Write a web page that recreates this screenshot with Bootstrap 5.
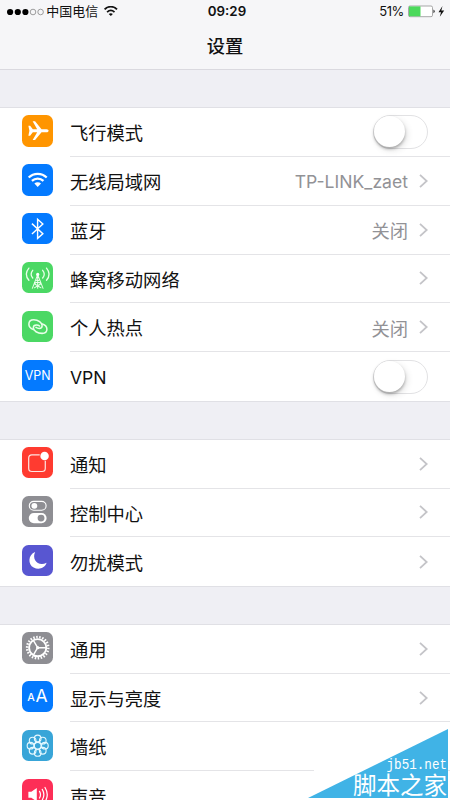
<!DOCTYPE html>
<html lang="zh-CN">
<head>
<meta charset="utf-8">
<meta name="viewport" content="width=device-width, initial-scale=1">
<title>设置</title>
<link href="https://cdn.jsdelivr.net/npm/bootstrap@5.3.0/dist/css/bootstrap.min.css" rel="stylesheet">
<style>
  body { font-family: Inter, "Noto Sans CJK SC", sans-serif; font-size: 18.3px; line-height: 24px; color: #111; background: #efeff4; }
  .screen { width: 450px; height: 800px; }
  .top-area { height: 70px; background: #f6f6f8; border-bottom: 1px solid #dad9df; }
  .status { height: 23px; font-size: 13px; line-height: 23px; padding: 0 5px 0 7px; }
  .status-side { flex: 1 1 0; }
  .clock { font-weight: 600; font-size: 13.3px; position: relative; left: 1px; }
  .percent { letter-spacing: -.4px; }
  .title { font-size: 18.3px; font-weight: 500; line-height: 46px; }
  .group { background: #fff; margin-top: 38px; box-shadow: 0 0 0 1px #e0e0e5; }
  .group + .group { margin-top: 38.6px; }
  .item { height: 48.85px; padding: 0 0 0 22px; border: 0; background: #fff; color: #111; }
  .tile { width: 31.4px; height: 31.4px; margin-top: 7.4px; border-radius: 6.5px; }
  .tile svg { width: 31.4px; height: 31.4px; display: block; }
  .body-line { margin-left: 16.6px; padding-right: 22px; border-bottom: 1px solid #e4e4e7; }
  .item:last-child .body-line { border-bottom: 0; }
  .label { padding-top: 2.2px; }
  .value { color: #929296; padding-top: 2.6px; }
  .latin { font-size: 17.6px; }
  .chev { width: 9px; height: 14px; margin-left: 11px; }
  .c-orange { background: #ff9500; } .c-blue { background: #047aff; } .c-green { background: #4bd864; }
  .c-red { background: #ff3b30; } .c-gray { background: #8e8e93; } .c-purple { background: #5856d1; }
  .c-cyan { background: #38a5d8; } .c-pink { background: #fd2e57; }
  .toggle { width: 55px; height: 34px; border: 1.5px solid #e2e2e4; border-radius: 17px; background: #fff; }
  .knob { width: 31px; height: 31px; border-radius: 50%; background: #fff; box-shadow: 0 2px 3px rgba(0,0,0,.28), 2px 3px 7px rgba(0,0,0,.12); }
  .stamp { right: 2px; bottom: 2px; width: 140px; height: 69px; background: #40b3e6; clip-path: polygon(0 100%, 100% 0, 100% 100%); }
  .stamp-box { right: 2px; bottom: 2px; width: 140px; height: 69px; color: #fff; padding: 31px 1px 0 0; }
  .stamp-url { font: 12.6px/12px "Liberation Mono", monospace; transform: scaleY(1.15); }
  .stamp-name { font: 23.5px/24px "Noto Sans CJK SC", sans-serif; }
  .fade-patch { right: 86px; bottom: 8px; width: 50px; height: 40px; background: #fff; }
</style>
</head>
<body>
<svg width="0" height="0" class="position-absolute">
  <symbol id="chev" viewBox="0 0 9 14"><path d="M1 .8 7.7 7 1 13.2" fill="none" stroke="#c4c4c8" stroke-width="1.8"/></symbol>
</svg>
<div class="screen position-relative overflow-hidden">
  <header class="top-area">
    <div class="status d-flex align-items-center">
      <div class="status-side d-flex align-items-center">
        <svg width="38" height="8" viewBox="0 0 38 8"><g fill="#000"><circle cx="3.1" cy="4" r="3.1"/><circle cx="10.8" cy="4" r="3.1"/><circle cx="18.4" cy="4" r="3.1"/></g><g fill="none" stroke="#777" stroke-width=".7"><circle cx="26" cy="4" r="2.8"/><circle cx="33.6" cy="4" r="2.8"/></g></svg>
        <span>&#8202;中国电信</span>
        <svg class="ms-1" width="16" height="12" viewBox="0 0 16 12"><g transform="translate(.8 -.9)"><g fill="none" stroke="#111" stroke-width="1.8"><path d="M1.8 4.3C5.2.7 10.8.7 14.2 4.3"/><path d="M4.3 7C6.5 4.9 9.5 4.9 11.7 7"/></g><path d="M5.9 8.8C7.2 7.8 8.8 7.8 10.1 8.8L8 11Z" fill="#111"/></g></svg>
      </div>
      <div class="clock">09:29</div>
      <div class="status-side d-flex align-items-center justify-content-end">
        <span class="percent me-1">51%</span>
        <svg width="37" height="14" viewBox="0 0 37 14"><rect x=".5" y="1" width="24" height="10.7" rx="1.5" fill="#fff" stroke="#929292" stroke-width=".8"/><path d="M1 1.4H12.5V11.3H1Z" fill="#4bd95b"/><path d="M25.5 4.6Q28 6.4 25.5 8.2Z" fill="#111"/><path d="M34.5 .9 30.5 7.2H33L31.8 11.7 36.2 5.5H33.3Z" fill="#111"/></svg>
      </div>
    </div>
    <div class="title text-center">设置</div>
  </header>

  <main>
    <div class="group list-group list-group-flush rounded-0">
      <div class="item list-group-item d-flex">
        <div class="tile c-orange"><svg viewBox="0 0 31 31"><path d="M6.3 10.5H8L10.7 14H15L10.5 6.2H12.9L19.3 14H24.2C27 14 27 17 24.2 17H19.3L12.9 24.8H10.5L15 17H10.7L8 20.5H6.3L7.3 15.5Z" fill="#fff"/></svg></div>
        <div class="body-line flex-fill d-flex align-items-center"><span class="label flex-fill">飞行模式</span><div class="toggle"><div class="knob"></div></div></div>
      </div>
      <div class="item list-group-item d-flex">
        <div class="tile c-blue"><svg viewBox="0 0 31 31"><g fill="none" stroke="#fff" stroke-width="2.2"><path d="M6.6 13.4C11.6 8.6 19.4 8.6 24.4 13.4"/><path d="M9.8 16.7C13 13.7 18 13.7 21.2 16.7"/></g><path d="M12.2 19.2C14.2 17.6 16.8 17.6 18.8 19.2L15.5 22.6Z" fill="#fff"/></svg></div>
        <div class="body-line flex-fill d-flex align-items-center"><span class="label flex-fill">无线局域网</span><span class="value latin">TP-LINK_zaet</span><svg class="chev"><use href="#chev"/></svg></div>
      </div>
      <div class="item list-group-item d-flex">
        <div class="tile c-blue"><svg viewBox="0 0 31 31"><path d="M9.8 10.5 20.6 20.4 15.4 25V6.2L20.6 10.8 9.8 20.7" fill="none" stroke="#fff" stroke-width="1.4"/></svg></div>
        <div class="body-line flex-fill d-flex align-items-center"><span class="label flex-fill">蓝牙</span><span class="value">关闭</span><svg class="chev"><use href="#chev"/></svg></div>
      </div>
      <div class="item list-group-item d-flex">
        <div class="tile c-green"><svg viewBox="0 0 31 31"><g fill="none" stroke="#e9ffe9" stroke-width="1.3" stroke-linecap="round"><path d="M10.6 8.2Q7.4 12 10.6 15.8M6.8 6Q1.7 12 6.8 18M20.4 8.2Q23.6 12 20.4 15.8M24.2 6Q29.3 12 24.2 18"/><path d="M15.5 12.5 10.2 26M15.5 12.5 20.8 26M13.5 17.5 18.8 21.5M17.5 17.5 12.2 21.5M12.2 21.5 18.8 25.5M18.8 21.5 12.2 25.5M15.5 14V26" stroke-width="1"/></g><circle cx="15.5" cy="12.3" r="1.6" fill="#fff"/></svg></div>
        <div class="body-line flex-fill d-flex align-items-center"><span class="label flex-fill">蜂窝移动网络</span><svg class="chev"><use href="#chev"/></svg></div>
      </div>
      <div class="item list-group-item d-flex">
        <div class="tile c-green"><svg viewBox="0 0 31 31"><g fill="none" stroke="#e9ffe9" stroke-width="1.5" stroke-linecap="round"><path d="M11.3 18.2C8.7 17.3 6.8 15.4 6.8 13C6.8 10.2 9 8.7 11.6 8.7C16 8.7 19.9 11.3 19.9 14.5C19.9 16.2 18.6 17.2 16.9 17.2C15.8 17.2 14.7 16.8 13.8 16.2"/><path d="M20.1 12.8C22.7 13.7 24.6 15.6 24.6 18C24.6 20.8 22.4 22.1 19.8 22.1C15.4 22.1 11.2 19.7 11.2 16.5C11.2 14.8 12.6 13.8 14.3 13.8C15.4 13.8 16.6 14.2 17.4 14.8"/></g></svg></div>
        <div class="body-line flex-fill d-flex align-items-center"><span class="label flex-fill">个人热点</span><span class="value">关闭</span><svg class="chev"><use href="#chev"/></svg></div>
      </div>
      <div class="item list-group-item d-flex">
        <div class="tile c-blue"><svg viewBox="0 0 31 31"><text x="15.5" y="20" font-size="12.8" fill="#fff" text-anchor="middle" textLength="25.5" lengthAdjust="spacingAndGlyphs">VPN</text></svg></div>
        <div class="body-line flex-fill d-flex align-items-center"><span class="label latin flex-fill">VPN</span><div class="toggle"><div class="knob"></div></div></div>
      </div>
    </div>

    <div class="group list-group list-group-flush rounded-0">
      <div class="item list-group-item d-flex">
        <div class="tile c-red"><svg viewBox="0 0 31 31"><path d="M17.5 7.8H9.8Q6.6 7.8 6.6 11V21Q6.6 24.2 9.8 24.2H19.8Q23 24.2 23 21V13.5" fill="none" stroke="#ffe4e0" stroke-width="1.2"/><circle cx="22.3" cy="8.9" r="4.2" fill="#fff"/></svg></div>
        <div class="body-line flex-fill d-flex align-items-center"><span class="label flex-fill">通知</span><svg class="chev"><use href="#chev"/></svg></div>
      </div>
      <div class="item list-group-item d-flex">
        <div class="tile c-gray"><svg viewBox="0 0 31 31"><rect x="7.2" y="5.3" width="16.6" height="8.8" rx="4.4" fill="none" stroke="#fff" stroke-width="1.1"/><circle cx="12.2" cy="9.7" r="2.9" fill="#fff"/><rect x="6.7" y="16.8" width="17.6" height="10" rx="5" fill="#fff"/><circle cx="18.8" cy="21.8" r="3.4" fill="#8e8e93"/></svg></div>
        <div class="body-line flex-fill d-flex align-items-center"><span class="label flex-fill">控制中心</span><svg class="chev"><use href="#chev"/></svg></div>
      </div>
      <div class="item list-group-item d-flex">
        <div class="tile c-purple"><svg viewBox="0 0 31 31"><path d="M13 6.8C5.8 9.4 5.7 19.3 11.5 22.2C16.5 25 22.8 22.8 24.3 17.6C15.8 21.8 9.4 14 13 6.8Z" fill="#fff"/></svg></div>
        <div class="body-line flex-fill d-flex align-items-center"><span class="label flex-fill">勿扰模式</span><svg class="chev"><use href="#chev"/></svg></div>
      </div>
    </div>

    <div class="group list-group list-group-flush rounded-0">
      <div class="item list-group-item d-flex">
        <div class="tile c-gray"><svg viewBox="0 0 31 31"><g fill="none" stroke="#fff"><circle cx="15.5" cy="15.5" r="8.5" stroke-width="1.9"/><circle cx="15.5" cy="15.5" r="10.5" stroke-width="2.4" pathLength="44" stroke-dasharray="1 1"/><path d="M15.5 15.5H24M15.5 15.5 11.2 8.2M15.5 15.5 11.2 22.8" stroke-width="1.4"/></g><circle cx="15.5" cy="15.5" r="1.6" fill="#fff"/></svg></div>
        <div class="body-line flex-fill d-flex align-items-center"><span class="label flex-fill">通用</span><svg class="chev"><use href="#chev"/></svg></div>
      </div>
      <div class="item list-group-item d-flex">
        <div class="tile c-blue"><svg viewBox="0 0 31 31" fill="#fff"><text x="5.2" y="19.8" font-size="10.5" font-weight="500">A</text><text x="13.3" y="21.2" font-size="17.3">A</text></svg></div>
        <div class="body-line flex-fill d-flex align-items-center"><span class="label flex-fill">显示与亮度</span><svg class="chev"><use href="#chev"/></svg></div>
      </div>
      <div class="item list-group-item d-flex">
        <div class="tile c-cyan"><svg viewBox="0 0 31 31"><g fill="none" stroke="#e5f8ff" stroke-width="1.1"><circle cx="15.5" cy="15.5" r="3.3"/><circle cx="22.6" cy="15.5" r="3.3"/><circle cx="20.5" cy="20.5" r="3.3"/><circle cx="15.5" cy="22.6" r="3.3"/><circle cx="10.5" cy="20.5" r="3.3"/><circle cx="8.4" cy="15.5" r="3.3"/><circle cx="10.5" cy="10.5" r="3.3"/><circle cx="15.5" cy="8.4" r="3.3"/><circle cx="20.5" cy="10.5" r="3.3"/></g></svg></div>
        <div class="body-line flex-fill d-flex align-items-center"><span class="label flex-fill">墙纸</span></div>
      </div>
      <div class="item list-group-item d-flex">
        <div class="tile c-pink"><svg viewBox="0 0 31 31"><path d="M6.3 12.5H9.2L14.6 8.8V22.2L9.2 18.5H6.3Z" fill="#fff"/><path d="M17.3 12.2Q19.2 15.5 17.3 18.8M20 10.3Q23.2 15.5 20 20.7M22.7 8.4Q27.2 15.5 22.7 22.6" fill="none" stroke="#fff" stroke-width="1.2" stroke-linecap="round"/></svg></div>
        <div class="body-line flex-fill d-flex align-items-center"><span class="label flex-fill">声音</span></div>
      </div>
    </div>
  </main>

  <div class="fade-patch position-absolute"></div>
  <div class="stamp position-absolute"></div>
  <div class="stamp-box position-absolute d-flex flex-column align-items-end text-nowrap">
    <span class="stamp-url">jb51.net</span>
    <span class="stamp-name">脚本之家</span>
  </div>
</div>
<script src="https://cdn.jsdelivr.net/npm/bootstrap@5.3.0/dist/js/bootstrap.bundle.min.js"></script>
</body>
</html>
